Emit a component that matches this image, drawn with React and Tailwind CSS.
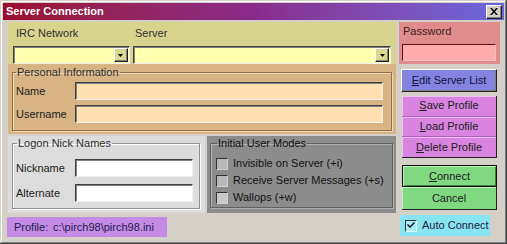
import React from 'react';

const sunken = 'border border-t-[#404040] border-l-[#404040] border-b-[#f0f0f0] border-r-[#f0f0f0] shadow-[inset_1px_1px_0_#808080]';
const raised = 'border border-t-white border-l-white border-b-[#202020] border-r-[#202020] shadow-[inset_-1px_-1px_0_#808080]';

function Combo({ width }) {
  return (
    <div className={`h-[18px] bg-[#ffffb0] flex justify-end items-stretch p-[1px] ${sunken}`} style={{ width }}>
      <div className={`w-[14px] bg-[#d8d890] flex items-center justify-center ${raised}`}>
        <svg width="5" height="3" viewBox="0 0 5 3"><path d="M0 0h5L2.5 3z" fill="#000" /></svg>
      </div>
    </div>
  );
}

function Field({ label, inputClass }) {
  return (
    <div className="flex items-center">
      <span className="w-[62px] pl-[3px]">{label}</span>
      <div className={`h-[18px] ${sunken} ${inputClass}`} />
    </div>
  );
}

function Check({ label, light }) {
  return (
    <div className="flex items-center h-[17px]">
      <div className={`w-[12px] h-[12px] ${light ? 'bg-[#c8c8c8]' : 'bg-[#b8b8b8]'} border border-t-[#303030] border-l-[#303030] border-b-[#d0d0d0] border-r-[#d0d0d0]`} />
      <span className="ml-[5px] text-[#101010]">{label}</span>
    </div>
  );
}

export default function App() {
  return (
    <div className="w-[507px] h-[244px] p-[3px] bg-[#d4d0c8] text-[11px] leading-[13px] text-[#202020] shadow-[inset_-1px_-1px_0_#404040,inset_1px_1px_0_#d4d0c8,inset_-2px_-2px_0_#808080,inset_2px_2px_0_#ffffff]" style={{ fontFamily: '"Liberation Sans", Arial, sans-serif' }}>
      {/* title bar */}
      <div className="h-[17px] flex items-center justify-between pl-[3px] pr-[2px] bg-linear-to-r from-[#9c0a2c] via-[#8a2a8c] to-[#6868dc]">
        <span className="text-white font-bold">Server Connection</span>
        <div className={`w-[16px] h-[14px] bg-[#d4d0c8] flex items-center justify-center ${raised}`}>
          <svg width="8" height="7" viewBox="0 0 8 7"><path d="M0 0h2l2 2.5L6 0h2L5 3.5 8 7H6L4 4.5 2 7H0l3-3.5z" fill="#000" /></svg>
        </div>
      </div>

      <div className="flex pl-[5px] pt-[2px] gap-[3px]">
        {/* left column */}
        <div className="w-[388px] flex flex-col">
          <div className="h-[42px] bg-[#d8d48e] px-[5px] pt-[5px]">
            <div className="flex gap-[3px]">
              <span className="w-[117px] pl-[3px] text-[#303030]">IRC Network</span>
              <span className="pl-[2px] text-[#303030]">Server</span>
            </div>
            <div className="flex gap-[3px] mt-[6px]">
              <Combo width={117} />
              <Combo width={259} />
            </div>
          </div>

          <div className="h-[70px] bg-[#d8b484] px-[4px] pt-[2px]">
            <fieldset className="h-[65px] w-[380px] border border-[#907050] shadow-[1px_1px_0_#f0d8b0,inset_1px_1px_0_#f0d8b0] px-0">
              <legend className="ml-[3px] px-[1px] text-[#303030]">Personal Information</legend>
              <div className="flex flex-col gap-[5px] pt-[3px]">
                <Field label="Name" inputClass="w-[308px] bg-[#ffe0b0]" />
                <Field label="Username" inputClass="w-[308px] bg-[#ffe0b0]" />
              </div>
            </fieldset>
          </div>

          <div className="h-[77px] mt-[2px] flex gap-[2px]">
            <div className="w-[197px] bg-[#dcdcdc] px-[4px] pt-[1px]">
              <fieldset className="h-[72px] w-[188px] border border-[#909090] shadow-[1px_1px_0_#fff,inset_1px_1px_0_#fff]">
                <legend className="ml-[4px] px-[1px] text-[#303030]">Logon Nick Names</legend>
                <div className="flex flex-col gap-[7px] pt-[9px]">
                  <Field label="Nickname" inputClass="w-[118px] bg-white" />
                  <Field label="Alternate" inputClass="w-[118px] bg-white" />
                </div>
              </fieldset>
            </div>
            <div className="w-[189px] bg-[#8c8c8c] px-[3px] pt-[1px]">
              <fieldset className="h-[71px] w-[183px] border border-[#606060] shadow-[1px_1px_0_#b0b0b0,inset_1px_1px_0_#b0b0b0] pl-[5px]">
                <legend className="ml-[1px] px-[1px] text-[#101010]">Initial User Modes</legend>
                <div className="flex flex-col pt-[5px]">
                  <Check label="Invisible on Server (+i)" />
                  <Check label="Receive Server Messages (+s)" />
                  <Check label="Wallops (+w)" light />
                </div>
              </fieldset>
            </div>
          </div>

          <div className="h-[20px] w-[160px] mt-[4px] -ml-[1px] bg-[#c48ae4] flex items-center pl-[7px] text-[#202050]">
            <span className="w-[39px]">Profile:</span>
            <span>c:\pirch98\pirch98.ini</span>
          </div>
        </div>

        {/* right column */}
        <div className="w-[101px] flex flex-col">
          <div className="h-[42px] bg-[#e08c8c] pt-[3px]">
            <div className="pl-[4px] text-[#402020]">Password</div>
            <div className="ml-[3px] mt-[6px] w-[94px] h-[17px] bg-[#ffacac] border border-t-[#601010] border-l-[#601010] border-b-[#f0c0c0] border-r-[#f0c0c0]" />
          </div>

          <div className={`ml-[2px] mt-[5px] w-[96px] h-[23px] bg-[#8484e0] flex items-center justify-center text-[#101040] ${raised}`}>
            <span><span className="underline">E</span>dit Server List</span>
          </div>

          <div className="ml-[3px] mt-[4px] w-[95px] h-[62px] bg-[#d884e0] flex flex-col border-r border-b border-[#202020]">
            <div className="flex-1 flex items-center justify-center border-b border-[#b060c0] shadow-[inset_1px_1px_0_#f0c0f8]"><span><span className="underline">S</span>ave Profile</span></div>
            <div className="flex-1 flex items-center justify-center border-b border-[#b060c0] shadow-[inset_1px_1px_0_#f0c0f8]"><span><span className="underline">L</span>oad Profile</span></div>
            <div className="flex-1 flex items-center justify-center shadow-[inset_1px_1px_0_#f0c0f8]"><span><span className="underline">D</span>elete Profile</span></div>
          </div>

          <div className="ml-[3px] mt-[7px] w-[95px] h-[22px] bg-[#80d880] border border-[#101010] flex items-center justify-center shadow-[inset_1px_1px_0_#c0f0c0,inset_-1px_-1px_0_#408040]">
            <span><span className="underline">C</span>onnect</span>
          </div>
          <div className="ml-[3px] w-[95px] h-[23px] bg-[#80d880] flex items-center justify-center border-r border-b border-[#202020] shadow-[inset_1px_1px_0_#c0f0c0]">
            <span>Cancel</span>
          </div>

          <div className="ml-[1px] mt-[5px] w-[90px] h-[21px] bg-[#88e4f0] flex items-center pl-[5px]">
            <div className="w-[12px] h-[12px] bg-[#a8ecf4] border border-t-[#303030] border-l-[#303030] border-b-[#e0ffff] border-r-[#e0ffff] flex items-center justify-center">
              <svg width="8" height="7" viewBox="0 0 8 7"><path d="M0 3l1-1 2 2 4-4 1 1-5 5z" fill="#101030" /></svg>
            </div>
            <span className="ml-[5px] text-[#202040]">Auto Connect</span>
          </div>
        </div>
      </div>
    </div>
  );
}
